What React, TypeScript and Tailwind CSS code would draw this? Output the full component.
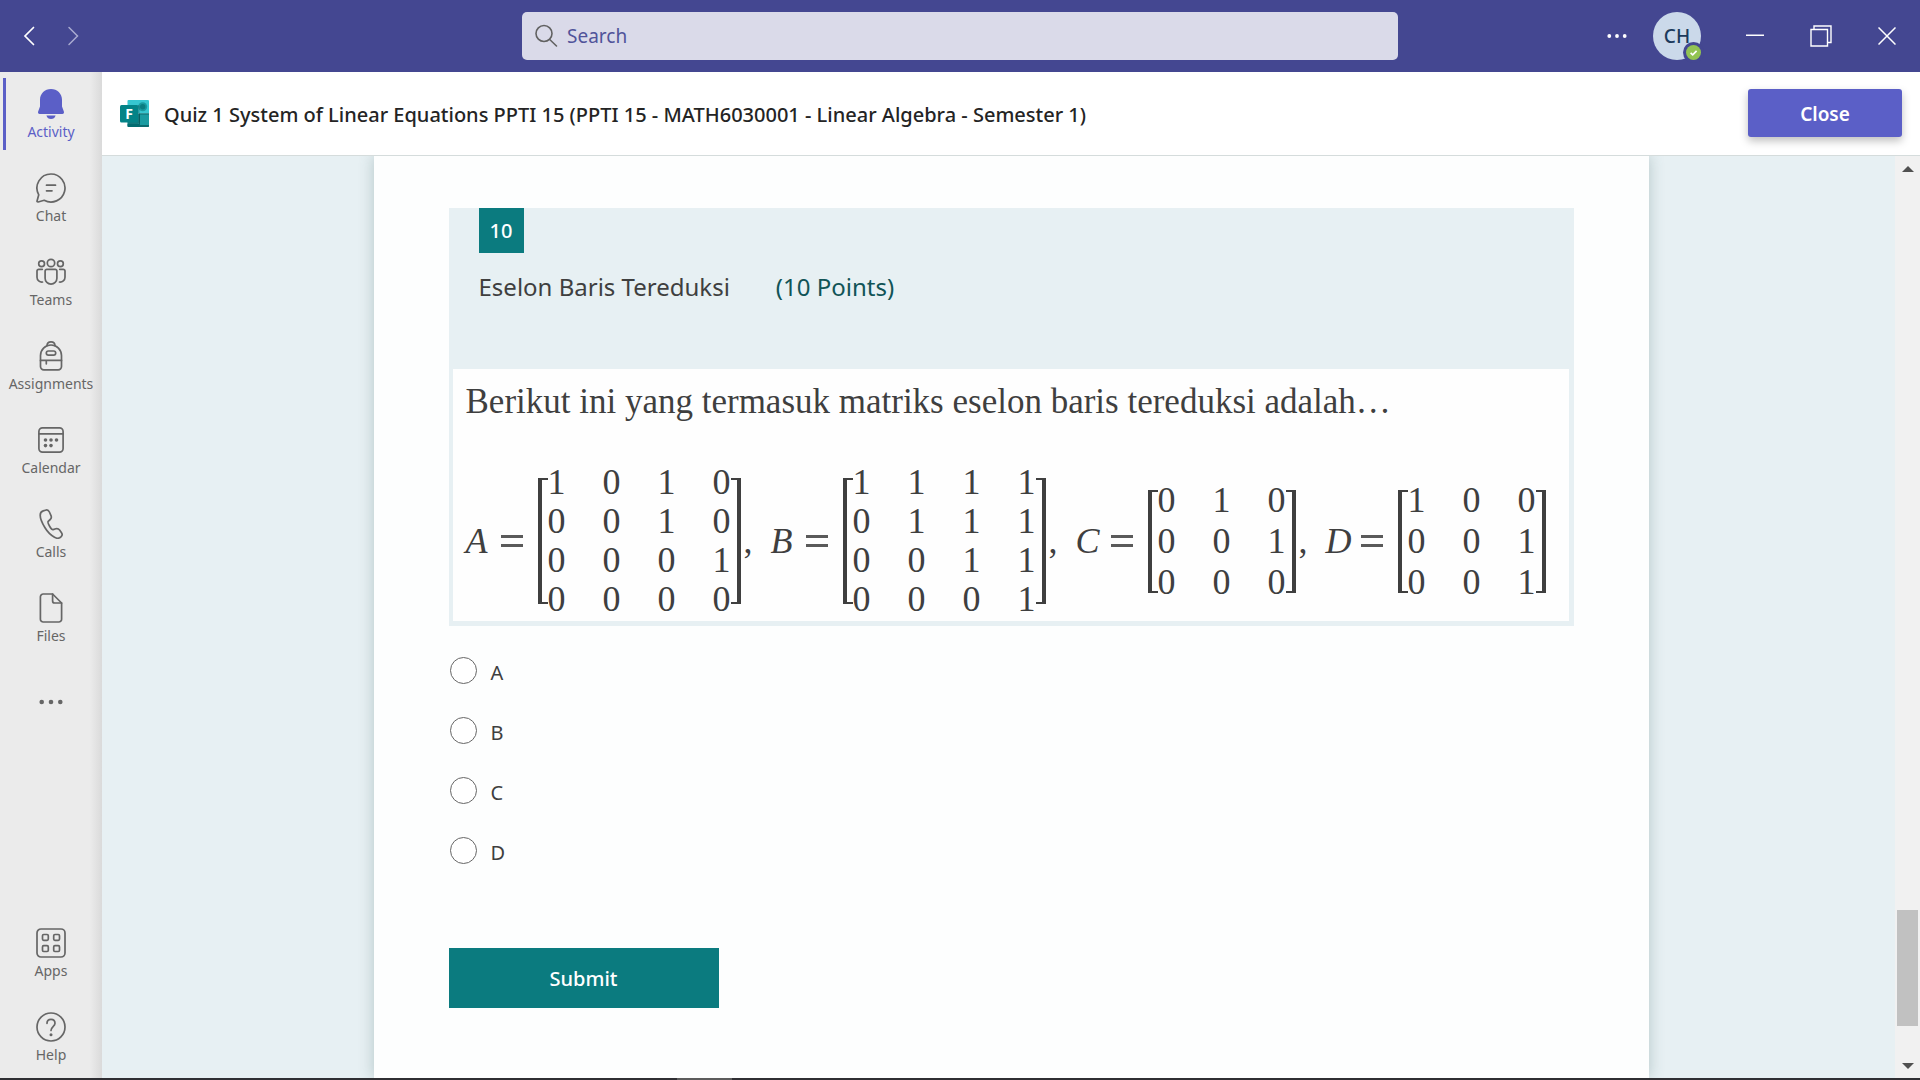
import type { ReactNode } from "react";

type NavItem = { label: string; icon: ReactNode; active?: boolean };

function Stroke({ children }: { children: ReactNode }) {
  return (
    <svg
      viewBox="0 0 30 30"
      className="size-[30px]"
      fill="none"
      stroke="currentColor"
      strokeWidth="1.7"
      strokeLinecap="round"
      strokeLinejoin="round"
      aria-hidden="true"
    >
      {children}
    </svg>
  );
}

const mainNav: NavItem[] = [
  {
    label: "Activity",
    active: true,
    icon: (
      <svg viewBox="0 0 30 30" className="size-[30px]" fill="currentColor" aria-hidden="true">
        <path d="M15 0C8.8 0 4 4.700 4 10.800V17.600L2.150 22.500C1.700 23.800 2.300 25 3.700 25H26.300C27.700 25 28.300 23.800 27.850 22.500L26 17.600V10.800C26 4.700 21.200 0 15 0Z" />
        <path d="M10.400 26.400H19.600C19 28.600 17.200 30 15 30S11 28.600 10.400 26.400Z" />
      </svg>
    ),
  },
  {
    label: "Chat",
    icon: (
      <Stroke>
        <path d="M15 1A14 14 0 1 1 8.200 27.250L2.100 28.950C1.400 29.100 0.900 28.600 1.050 27.900L2.750 21.800A14 14 0 0 1 15 1Z" />
        <path d="M10.500 12.200H19.500M10.500 17.800H16" />
      </Stroke>
    ),
  },
  {
    label: "Teams",
    icon: (
      <Stroke>
        <circle cx="15" cy="6" r="3.700" />
        <circle cx="5.600" cy="6.800" r="2.900" />
        <circle cx="24.400" cy="6.800" r="2.900" />
        <path d="M10.800 12.300H19.200A1.700 1.700 0 0 1 20.900 14V21.200A5.900 5.900 0 0 1 9.100 21.200V14A1.700 1.700 0 0 1 10.800 12.300Z" />
        <path d="M6.300 12.300H2.700A1.700 1.700 0 0 0 1 14V20.200A4.900 4.900 0 0 0 6.500 25" />
        <path d="M23.700 12.300H27.300A1.700 1.700 0 0 1 29 14V20.200A4.900 4.900 0 0 1 23.500 25" />
      </Stroke>
    ),
  },
  {
    label: "Assignments",
    icon: (
      <Stroke>
        <path d="M4.500 14.500A10.500 10.500 0 0 1 25.500 14.500V25.500A3.300 3.300 0 0 1 22.200 28.800H7.800A3.300 3.300 0 0 1 4.500 25.500Z" />
        <path d="M11 4.800C11 2.400 12.600 0.900 15 0.900S19 2.400 19 4.800" />
        <rect x="10.300" y="10" width="9.400" height="4.200" rx="2.100" />
        <path d="M4.500 19.400H25.500M10.300 19.400V22.800" />
      </Stroke>
    ),
  },
  {
    label: "Calendar",
    icon: (
      <Stroke>
        <rect x="2.900" y="2.900" width="24.200" height="24.200" rx="3.600" />
        <path d="M2.900 8.800H27.100" />
        <g fill="currentColor" stroke="none">
          <circle cx="9.500" cy="15" r="1.800" />
          <circle cx="15" cy="15" r="1.800" />
          <circle cx="20.500" cy="15" r="1.800" />
          <circle cx="9.500" cy="20.600" r="1.800" />
          <circle cx="15" cy="20.600" r="1.800" />
        </g>
      </Stroke>
    ),
  },
  {
    label: "Calls",
    icon: (
      <Stroke>
        <path d="M7.200 1.900L9.400 1.200C11 0.700 12.700 1.500 13.400 3L15 6.600C15.600 8 15.300 9.500 14.200 10.500L12.200 12.400C11.600 13 12.300 15 13.600 17.200C14.900 19.400 16.300 20.900 17.100 20.600L19.800 19.800C21.200 19.400 22.700 19.900 23.600 21.100L25.500 23.700C26.400 25 26.200 26.700 25.100 27.700L23.700 28.700C22.300 29.600 20.500 29.400 18.500 28.300C15.500 26.600 12 23.800 9 18.800C6 13.800 4.200 9.500 4.200 6.200C4.200 4 5.300 2.500 7.200 1.900Z" />
      </Stroke>
    ),
  },
  {
    label: "Files",
    icon: (
      <Stroke>
        <path d="M7.200 1H16.600L25.600 10V26.200A2.800 2.800 0 0 1 22.800 29H7.200A2.800 2.800 0 0 1 4.400 26.200V3.800A2.800 2.800 0 0 1 7.200 1Z" />
        <path d="M16.600 1V8A2 2 0 0 0 18.600 10H25.600" />
      </Stroke>
    ),
  },
];

const footNav: NavItem[] = [
  {
    label: "Apps",
    icon: (
      <Stroke>
        <rect x="1" y="1" width="28" height="28" rx="4" />
        <rect x="6.500" y="6.500" width="5.800" height="5.800" rx="1.200" />
        <rect x="17.700" y="6.500" width="5.800" height="5.800" rx="1.200" />
        <rect x="6.500" y="17.700" width="5.800" height="5.800" rx="1.200" />
        <rect x="17.700" y="17.700" width="5.800" height="5.800" rx="1.200" />
      </Stroke>
    ),
  },
  {
    label: "Help",
    icon: (
      <Stroke>
        <circle cx="15" cy="15" r="14" />
        <path d="M11 11.300C11 8.900 12.700 7.300 15 7.300S19 8.900 19 11.200C19 14.500 15 14.800 15 18.500" />
        <circle cx="15" cy="22.800" r="1.500" fill="currentColor" stroke="none" />
      </Stroke>
    ),
  },
];

function NavButton({ item }: { item: NavItem }) {
  return (
    <button
      type="button"
      className={
        item.active
          ? "relative flex h-[84px] w-full flex-col items-center gap-[3px] pt-[17px] text-[14px] leading-5 text-[#5b5fc7]"
          : "relative flex h-[84px] w-full flex-col items-center gap-[3px] pt-[17px] text-[14px] leading-5 text-[#666666]"
      }
    >
      {item.active && <span className="absolute top-1.5 left-[3px] h-[72px] w-[3px] bg-[#5b5fc7]" />}
      {item.icon}
      <span>{item.label}</span>
    </button>
  );
}

function TitleBar() {
  return (
    <header className="grid h-[72px] shrink-0 grid-cols-[1fr_minmax(0,876px)_1fr] items-center bg-[#444791] text-white">
      <div className="flex items-center gap-6 pl-5">
        <button type="button" aria-label="Back">
          <svg viewBox="0 0 20 20" className="size-5" fill="none" stroke="currentColor" strokeWidth="1.700" strokeLinecap="round">
            <path d="M13.500 1.500L5 10L13.500 18.500" />
          </svg>
        </button>
        <button type="button" aria-label="Forward" className="text-[#a9abd0]">
          <svg viewBox="0 0 20 20" className="size-5" fill="none" stroke="currentColor" strokeWidth="1.500" strokeLinecap="round">
            <path d="M5 1.500L13.500 10L5 18.500" />
          </svg>
        </button>
      </div>
      <label className="flex h-12 items-center gap-[9px] rounded-[5px] bg-[#dadae9] pl-3">
        <svg viewBox="0 0 24 24" className="size-6 shrink-0" fill="none" stroke="#616161" strokeWidth="1.600" strokeLinecap="round" aria-hidden="true">
          <circle cx="10" cy="9.500" r="8" />
          <path d="M15.700 15.500L22.500 22" />
        </svg>
        <input
          type="text"
          aria-label="Search"
          placeholder="Search"
          className="w-full bg-transparent text-[19px] text-[#444791] outline-none placeholder:text-[#50539a] placeholder:opacity-100"
        />
      </label>
      <div className="flex items-center justify-end pr-6">
        <button type="button" aria-label="More options" className="mr-[26px]">
          <svg viewBox="0 0 20 6" className="h-1.5 w-5" fill="currentColor">
            <circle cx="2.300" cy="3" r="1.900" />
            <circle cx="10" cy="3" r="1.900" />
            <circle cx="17.700" cy="3" r="1.900" />
          </svg>
        </button>
        <button
          type="button"
          aria-label="Account CH, available"
          className="relative mr-[45px] flex size-12 items-center justify-center rounded-full bg-[#cbd9ea] text-[19px] font-medium text-[#1b3a5c]"
        >
          CH
          <svg viewBox="0 0 21 21" className="absolute -right-[3px] -bottom-[3px] size-[21px]" aria-hidden="true">
            <circle cx="10.500" cy="10.500" r="10.500" fill="#444791" />
            <circle cx="10.500" cy="10.500" r="7.500" fill="#92c353" />
            <path d="M7.600 10.800L9.700 12.800L13.600 8.800" fill="none" stroke="#fff" strokeWidth="1.700" />
          </svg>
        </button>
        <button type="button" aria-label="Minimize" className="mr-[46px]">
          <svg viewBox="0 0 18 22" className="h-[22px] w-[18px]" stroke="currentColor" strokeWidth="1.500">
            <path d="M0 10.250H18" />
          </svg>
        </button>
        <button type="button" aria-label="Restore" className="mr-[46px]">
          <svg viewBox="0 0 22 22" className="size-[22px]" fill="none" stroke="currentColor" strokeWidth="1.400">
            <path d="M1 4.500H17.500V21H1ZM4 4.500V1H21V17.500H17.500" />
          </svg>
        </button>
        <button type="button" aria-label="Close window">
          <svg viewBox="0 0 18 18" className="size-[18px]" stroke="currentColor" strokeWidth="1.500">
            <path d="M0.500 0.500L17.500 17.500M17.500 0.500L0.500 17.500" />
          </svg>
        </button>
      </div>
    </header>
  );
}

function Sidebar() {
  return (
    <nav className="relative flex w-[102px] shrink-0 flex-col justify-between bg-[#ebebeb] bg-[linear-gradient(to_left,#dadada,#ebebeb_12px)]">
      <div>
        {mainNav.map((item) => (
          <NavButton key={item.label} item={item} />
        ))}
        <button type="button" aria-label="More apps" className="flex h-[84px] w-full items-center justify-center text-[#666666]">
          <svg viewBox="0 0 24 6" className="h-1.5 w-6" fill="currentColor">
            <circle cx="2.700" cy="3" r="2.300" />
            <circle cx="12" cy="3" r="2.300" />
            <circle cx="21.300" cy="3" r="2.300" />
          </svg>
        </button>
      </div>
      <div className="-mb-px">
        {footNav.map((item) => (
          <NavButton key={item.label} item={item} />
        ))}
      </div>
    </nav>
  );
}

function FormsLogo() {
  return (
    <svg viewBox="0 0 29 27" className="h-[27px] w-[29px] shrink-0" aria-hidden="true">
      <path d="M8.500 0H28A1 1 0 0 1 29 1V13.500H7.500V1A1 1 0 0 1 8.500 0Z" fill="#37c6d0" />
      <path d="M7.500 13.500H29V26A1 1 0 0 1 28 27H8.500A1 1 0 0 1 7.500 26Z" fill="#1a9ba1" />
      <path d="M19 13.500H29V26A1 1 0 0 1 28 27H19Z" fill="#0b6b6f" />
      <rect x="20" y="14.500" width="9" height="10.500" fill="#1a9ba1" />
      <path d="M7.500 24H19V27H8.500A1 1 0 0 1 7.500 26Z" fill="#036c70" />
      <circle cx="22.700" cy="6.700" r="4.500" fill="#1a9ba1" />
      <circle cx="22.700" cy="6.700" r="2.700" fill="#0b7d81" />
      <path d="M7.500 5H18.300A1.500 1.500 0 0 1 19.500 6.500V22A2 2 0 0 1 17.500 24H7.500Z" fill="#000" opacity=".22" />
      <rect y="5" width="18" height="17.500" rx="1.500" fill="#038387" />
      <text x="9" y="18.800" textAnchor="middle" fontFamily="Noto Sans, sans-serif" fontWeight="700" fontSize="14" fill="#fff">
        F
      </text>
    </svg>
  );
}

function TabHeader() {
  return (
    <div className="flex h-[84px] shrink-0 items-center justify-between gap-4 border-b border-[#d5dcdc] bg-white pr-[18px] pl-[18px]">
      <div className="flex min-w-0 items-center gap-[15px]">
        <FormsLogo />
        <h1 className="truncate pt-0.5 text-[20px] leading-7 font-medium text-[#242424]">
          Quiz 1 System of Linear Equations PPTI 15 (PPTI 15 - MATH6030001 - Linear Algebra - Semester 1)
        </h1>
      </div>
      <button
        type="button"
        className="mb-px h-12 w-[154px] shrink-0 rounded-[3px] bg-[#5b5fc7] pt-0.5 text-[19px] font-semibold text-white shadow-[0_4px_8px_rgba(0,0,0,0.25)]"
      >
        Close
      </button>
    </div>
  );
}

type MatrixProps = { name: string; rows: number[][] };

const matrices: MatrixProps[] = [
  { name: "A", rows: [[1, 0, 1, 0], [0, 0, 1, 0], [0, 0, 0, 1], [0, 0, 0, 0]] },
  { name: "B", rows: [[1, 1, 1, 1], [0, 1, 1, 1], [0, 0, 1, 1], [0, 0, 0, 1]] },
  { name: "C", rows: [[0, 1, 0], [0, 0, 1], [0, 0, 0]] },
  { name: "D", rows: [[1, 0, 0], [0, 0, 1], [0, 0, 1]] },
];

function Matrix({ name, rows }: MatrixProps) {
  const large = rows.length === 4;
  const bracket = large ? "h-[126px]" : "h-[103px]";
  return (
    <div className="flex items-center">
      <span className="w-[35px] italic">{name}</span>
      <span className="flex w-[37px] flex-col gap-[6px]" role="img" aria-label="equals">
        <span className="h-[3px] w-[22px] bg-[#5a5a5a]" />
        <span className="h-[3px] w-[22px] bg-[#5a5a5a]" />
      </span>
      <span className={`${bracket} w-[10px] border-y-2 border-l-4 border-[#3f3f3f]`} />
      <table className="border-collapse">
        <tbody>
          {rows.map((row, r) => (
            <tr key={r} className={large ? "h-[39px]" : "h-[41px]"}>
              {row.map((value, c) => (
                <td key={c} className="p-0 pr-[37px] text-center leading-[39px] last:pr-0">
                  {value}
                </td>
              ))}
            </tr>
          ))}
        </tbody>
      </table>
      <span className={`${bracket} w-[10px] border-y-2 border-r-4 border-[#3f3f3f]`} />
    </div>
  );
}

function Question() {
  return (
    <section className="bg-[#e7f0f3] pb-[5px]">
      <div className="px-[30px]">
        <span className="flex size-[45px] items-center justify-center bg-[#0b7b7f] text-[20px] font-medium text-white">10</span>
        <h2 className="flex gap-[46px] pt-[18px] text-[24px] leading-8 text-[#3f3f3f]">
          <span>Eselon Baris Tereduksi</span>
          <span className="text-[#115457]">(10 Points)</span>
        </h2>
      </div>
      <div className="mr-[5px] ml-1 mt-[66px] h-[252px] bg-[#fefefe] px-[13px] pt-3 font-['Liberation_Serif',serif] text-[#3f3f3f]">
        <p className="text-[35px] leading-[42px] whitespace-nowrap">
          Berikut ini yang termasuk matriks eselon baris tereduksi adalah…
        </p>
        <div className="flex items-center pt-10 text-[36px] leading-[39px]">
          {matrices.map((m, i) => (
            <div key={m.name} className="flex items-center">
              <Matrix {...m} />
              {i < matrices.length - 1 && <span className="w-[30px] pl-[3px]">,</span>}
            </div>
          ))}
        </div>
      </div>
    </section>
  );
}

function FormBody() {
  return (
    <form className="bg-[#fdfefe] px-[75px] pt-[52px] shadow-[0_0_14px_rgba(60,100,100,0.3)]" onSubmit={(e) => e.preventDefault()}>
      <Question />
      <fieldset aria-label="Eselon Baris Tereduksi" className="flex flex-col pt-[31px]">
        {["A", "B", "C", "D"].map((option) => (
          <label key={option} className="flex h-[60px] items-start gap-[14px] text-[20px] leading-8 text-[#3f3f3f]">
            <input
              type="radio"
              name="answer"
              value={option}
              className="ml-px size-[27px] shrink-0 appearance-none rounded-full border border-[#666] bg-white checked:border-8 checked:border-[#0b7b7f]"
            />
            {option}
          </label>
        ))}
      </fieldset>
      <button type="submit" className="mt-[51px] h-[60px] w-[270px] bg-[#0b7b7f] pt-0.5 text-[20px] font-medium text-white">
        Submit
      </button>
    </form>
  );
}

function ScrollBar() {
  return (
    <div className="flex w-[25px] flex-col items-center justify-between justify-self-end bg-[#f1f1f1] pt-[10px] pb-[9px]" aria-hidden="true">
      <svg viewBox="0 0 12 6" className="h-1.5 w-3" fill="#505050">
        <path d="M0 6L6 0L12 6Z" />
      </svg>
      <div className="mt-auto mb-[37px] h-[116px] w-[21px] bg-[#c1c1c1]" />
      <svg viewBox="0 0 12 6" className="h-1.5 w-3" fill="#505050">
        <path d="M0 0L6 6L12 0Z" />
      </svg>
    </div>
  );
}

export default function App() {
  return (
    <div className="flex h-screen flex-col overflow-hidden bg-white font-['Noto_Sans',sans-serif]">
      <TitleBar />
      <div className="flex min-h-0 flex-1">
        <Sidebar />
        <main className="flex min-w-0 flex-1 flex-col">
          <TabHeader />
          <div className="grid min-h-0 flex-1 grid-cols-[1fr_minmax(0,1275px)_1fr] overflow-hidden bg-[#e7f0f3]">
            <div />
            <FormBody />
            <ScrollBar />
          </div>
        </main>
      </div>
      <div className="flex h-0.5 shrink-0 bg-[#2f2f33] pl-[677px]">
        <div className="w-[55px] bg-[#5c5c5c]" />
      </div>
    </div>
  );
}
